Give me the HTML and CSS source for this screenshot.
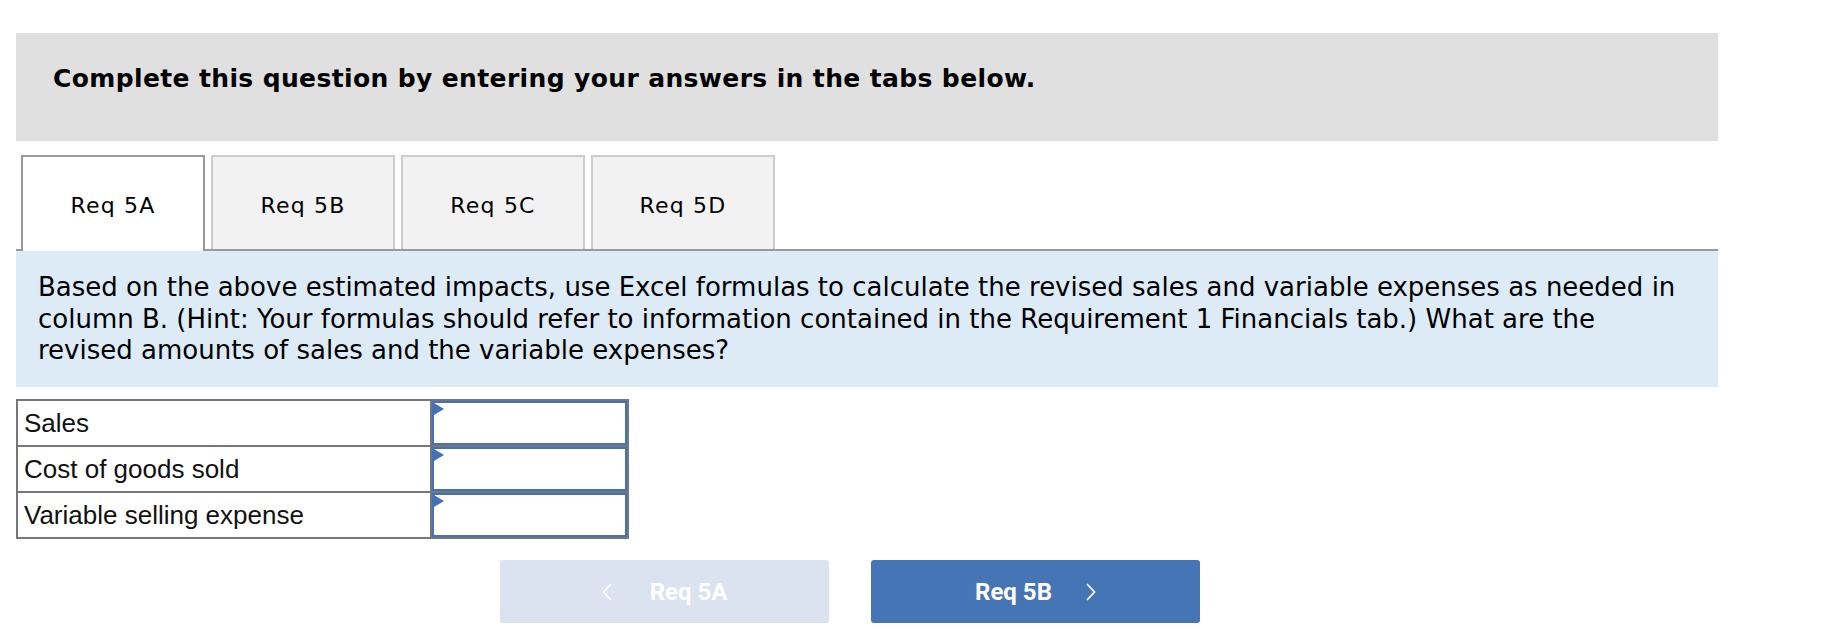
FILE: index.html
```html
<!DOCTYPE html>
<html>
<head>
<meta charset="utf-8">
<link rel="stylesheet" href="styles.css">
</head>
<body>
<div class="wrap">
  <div class="banner">Complete this question by entering your answers in the tabs below.</div>
  <div class="tabs">
    <div class="tab active">Req 5A</div>
    <div class="tab">Req 5B</div>
    <div class="tab">Req 5C</div>
    <div class="tab">Req 5D</div>
  </div>
  <div class="prompt">Based on the above estimated impacts, use Excel formulas to calculate the revised sales and variable expenses as needed in column B. (Hint: Your formulas should refer to information contained in the Requirement 1 Financials tab.) What are the revised amounts of sales and the variable expenses?</div>
  <table class="grid">
    <tr><td class="label">Sales</td><td class="cell"><div class="input"><span class="flag"></span></div></td></tr>
    <tr><td class="label">Cost of goods sold</td><td class="cell"><div class="input"><span class="flag"></span></div></td></tr>
    <tr><td class="label">Variable selling expense</td><td class="cell"><div class="input"><span class="flag"></span></div></td></tr>
  </table>
  <div class="nav">
    <div class="btn prev">
      <svg class="chev" width="10" height="18" viewBox="0 0 10 18"><polyline points="9,1 1.5,9 9,17" fill="none" stroke="#fff" stroke-width="1.8"/></svg>
      <span>Req 5A</span>
    </div>
    <div class="btn next">
      <span>Req 5B</span>
      <svg class="chev" width="10" height="18" viewBox="0 0 10 18"><polyline points="1,1 8.5,9 1,17" fill="none" stroke="#fff" stroke-width="1.8"/></svg>
    </div>
  </div>
</div>
</body>
</html>
```
FILE: styles.css
```css
html, body {
  margin: 0;
  padding: 0;
  background: #fff;
}
.wrap {
  margin: 33px 0 0 16px;
  width: 1702px;
  font-family: "DejaVu Sans", Verdana, sans-serif;
  color: #000;
}
.banner {
  background: #e0e0e0;
  height: 108px;
  box-sizing: border-box;
  padding: 30px 37px 0;
  font-weight: bold;
  font-size: 25px;
  letter-spacing: 0.37px;
  line-height: 32px;
}
.tabs {
  margin-top: 14px;
  display: flex;
  gap: 6px;
  padding-left: 5px;
  border-bottom: 2px solid #9a9a9a;
  height: 94px;
}
.tab {
  width: 184px;
  box-sizing: border-box;
  height: 94px;
  background: #f2f2f2;
  border: 2px solid #cccccc;
  border-bottom: none;
  display: flex;
  align-items: center;
  justify-content: center;
  font-size: 22px;
  letter-spacing: 1.2px;
  padding-top: 4px;
}
.tab.active {
  background: #fff;
  border-color: #9a9a9a;
  height: 96px;
  padding-bottom: 2px;
}
.prompt {
  background: #ddebf7;
  height: 136px;
  box-sizing: border-box;
  padding: 21px 40px 0 22px;
  font-size: 26px;
  line-height: 31.5px;
}
.grid {
  margin-top: 12px;
  border-collapse: collapse;
  border: 2px solid #777;
  font-family: "Liberation Sans", Arial, sans-serif;
  font-size: 26px;
}
.grid td {
  border: 2px solid #777;
  height: 44px;
  padding: 0;
}
.label {
  width: 406px;
  padding-left: 6px !important;
  color: #111;
}
.cell {
  width: 195px;
}
.input {
  position: relative;
  border: 2px solid #4472b4;
  box-sizing: border-box;
  height: 44px;
  background: #fff;
}
.flag {
  position: absolute;
  left: 0;
  top: 0;
  width: 0;
  height: 0;
  border-top: 6px solid transparent;
  border-bottom: 6px solid transparent;
  border-left: 10px solid #4472b4;
}
.nav {
  margin-top: 21px;
  display: flex;
  gap: 42px;
  padding-left: 484px;
}
.btn {
  width: 329px;
  height: 63px;
  border-radius: 3px;
  display: flex;
  align-items: center;
  justify-content: center;
  gap: 38px;
  color: #fff;
  font-family: Roboto, "Liberation Sans", sans-serif;
  font-weight: bold;
  font-size: 24px;
}
.next {
  gap: 34px;
}
.prev {
  background: #dae3ef;
}
.next {
  background: #4675b6;
}
```
